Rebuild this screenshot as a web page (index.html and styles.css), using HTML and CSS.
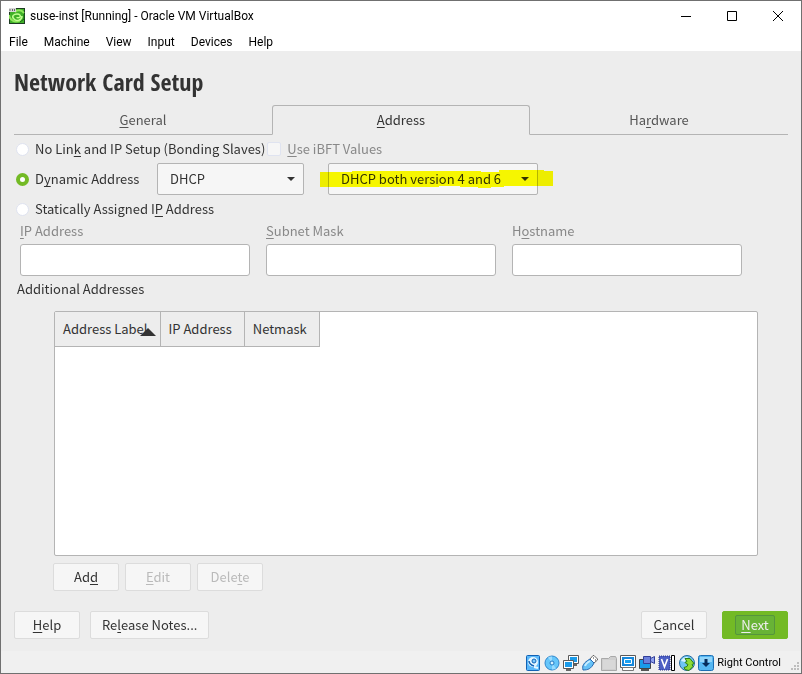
FILE: index.html
```html
<!DOCTYPE html>
<html lang="en">
<head>
<meta charset="utf-8">
<title>suse-inst [Running] - Oracle VM VirtualBox</title>
<link rel="stylesheet" href="styles.css">
</head>
<body>
<div class="window">
  <header class="titlebar">
    <svg width="16" height="16" viewBox="0 0 16 16" aria-hidden="true">
      <rect width="16" height="16" fill="#1d3b22"/>
      <rect x="1" y="1" width="14" height="14" fill="#3fb028"/>
      <path d="M0 7c1 6 6 8 12 5M15 5C12 1 8 2 6 4" fill="none" stroke="#8fe85c" stroke-width="2"/>
      <path d="M13 8c0 4-5 6-8 3S5 6 8 6s4 2 3 3-3 1-3 0" fill="none" stroke="#c2ff92" stroke-width="1.5"/>
      <path d="M15 6v5l-4 3" fill="none" stroke="#176b14"/>
      <rect width="7" height="4" fill="#d8d8d8"/>
      <path d="M0 2h2M3.500 1v2M5.500 1v2" stroke="#666" fill="none"/>
    </svg>
    <span class="window-title">suse-inst [Running] - Oracle VM VirtualBox</span>
    <div class="window-buttons">
      <button type="button" aria-label="Minimize"><svg width="10" height="10" viewBox="0 0 10 10"><path d="M0 5.5h10"/></svg></button>
      <button type="button" aria-label="Maximize"><svg width="10" height="10" viewBox="0 0 10 10"><path d="M.5 .5h9v9h-9z"/></svg></button>
      <button type="button" aria-label="Close"><svg width="10" height="10" viewBox="0 0 10 10"><path d="M0 0l10 10M10 0L0 10"/></svg></button>
    </div>
  </header>
  <nav class="menubar">
    <button type="button">File</button>
    <button type="button">Machine</button>
    <button type="button">View</button>
    <button type="button">Input</button>
    <button type="button">Devices</button>
    <button type="button">Help</button>
  </nav>

  <main class="guest">
    <h1>Network Card Setup</h1>
    <div class="tabs" role="tablist">
      <button type="button" role="tab" class="tab"><u>G</u>eneral</button>
      <button type="button" role="tab" class="tab active" aria-selected="true"><u>A</u>ddress</button>
      <button type="button" role="tab" class="tab">Ha<u>r</u>dware</button>
    </div>

    <div class="options">
      <div class="option-row">
        <label class="choice"><input type="radio" name="setup"><span>No Lin<u>k</u> and IP Setup (Bonding Slaves)</span></label>
        <label class="choice disabled"><input type="checkbox" disabled><span><u>U</u>se iBFT Values</span></label>
      </div>
      <div class="option-row">
        <label class="choice dynamic"><input type="radio" name="setup" checked><span>D<u>y</u>namic Address</span></label>
        <div class="combo">
          <select aria-label="Dynamic mode"><option>DHCP</option></select>
          <svg class="arrow" width="8" height="4" viewBox="0 0 8 4" aria-hidden="true"><path d="M0 0h8L4 4z"/></svg>
        </div>
        <div class="combo version">
          <select aria-label="DHCP version"><option>DHCP both version 4 and 6</option></select>
          <svg class="arrow" width="8" height="4" viewBox="0 0 8 4" aria-hidden="true"><path d="M0 0h8L4 4z"/></svg>
          <svg class="marker" width="233" height="18" viewBox="0 0 233 18" aria-hidden="true"><path d="M0 2h32v-1h129v1h18v-2h45v1h9v15h-49v1h-13v1h-13v-1h-18v-1h-21v1H0z"/></svg>
        </div>
      </div>
      <div class="option-row">
        <label class="choice"><input type="radio" name="setup"><span>Statically Assigned I<u>P</u> Address</span></label>
      </div>
    </div>

    <div class="fields">
      <div class="field"><label for="ip"><u>I</u>P Address</label><input id="ip" type="text" disabled></div>
      <div class="field"><label for="mask"><u>S</u>ubnet Mask</label><input id="mask" type="text" disabled></div>
      <div class="field"><label for="host">H<u>o</u>stname</label><input id="host" type="text" disabled></div>
    </div>

    <h2>Additional Addresses</h2>
    <div class="table-box">
      <table>
        <thead><tr>
          <th class="sorted">Address Label<svg width="16" height="8" viewBox="0 0 16 8" aria-hidden="true"><path d="M0 8h16L8 0z"/></svg></th>
          <th>IP Address</th>
          <th>Netmask</th>
        </tr></thead>
      </table>
    </div>
    <div class="table-actions">
      <button type="button" class="btn">Ad<u>d</u></button>
      <button type="button" class="btn" disabled><u>E</u>dit</button>
      <button type="button" class="btn" disabled>Dele<u>t</u>e</button>
    </div>
    <div class="wizard-actions">
      <button type="button" class="btn"><u>H</u>elp</button>
      <button type="button" class="btn">Re<u>l</u>ease Notes...</button>
      <button type="button" class="btn cancel"><u>C</u>ancel</button>
      <button type="button" class="btn primary"><span><u>N</u>ext</span></button>
    </div>
  </main>

  <footer class="statusbar">
    <svg width="16" height="16" viewBox="0 0 16 16" aria-label="Hard disk">
      <rect x="1.500" y=".5" width="13" height="15" rx="1" fill="#5ab8fa" stroke="#1262b5"/>
      <circle cx="8" cy="7" r="5" fill="#e6f6ff"/><circle cx="9" cy="6" r="2" fill="#7cc8fb" stroke="#1262b5"/>
      <path d="M4 6c0 3 2 4 5 5" fill="none" stroke="#1262b5" stroke-width="1.500"/><path d="M9 12l4 1" stroke="#e8f7ff" stroke-width="2"/>
    </svg>
    <svg width="16" height="16" viewBox="0 0 16 16" aria-label="Optical drive">
      <circle cx="8" cy="8" r="7" fill="#66c6fa" stroke="#2f86cc"/>
      <path d="M8 8L4 2.500a7 7 0 0 1 4-1zM8 8l4 5.500a7 7 0 0 1-4 1z" fill="#9adcff"/>
      <circle cx="8" cy="8" r="2" fill="#d8f2ff" stroke="#2378c2"/>
    </svg>
    <svg width="16" height="16" viewBox="0 0 16 16" aria-label="Network">
      <path d="M5.500 .5h10v8h-10z" fill="#fff" stroke="#5a5a5a"/><path d="M7 2h7v5H7z" fill="#1a9bea"/><path d="M11 9h3v2h-3z" fill="#666"/>
      <path d="M.5 5.500h10v8H.5z" fill="#fff" stroke="#5a5a5a"/><path d="M2 7h7v5H2z" fill="#1a9bea"/><path d="M3 14h5v2H3z" fill="#666"/>
    </svg>
    <svg width="16" height="16" viewBox="0 0 16 16" aria-label="USB">
      <path d="M8 4l3-3.500h1L15.500 4v1L12 8z" fill="#fff" stroke="#666"/><path d="M11 3h1M13 5h1" stroke="#333"/>
      <path d="M1 15c-1-4 0-7 7-11l4 4c-3 6-6 7-11 7z" fill="#65c1f6" stroke="#2869b0"/>
      <path d="M3 11c1-3 2-3 5-5" fill="none" stroke="#c8edff" stroke-width="2"/>
    </svg>
    <svg width="16" height="16" viewBox="0 0 16 16" aria-label="Shared folders">
      <path d="M.5 15.500v-12h7l2-2h5l1 2v12z" fill="#cfcfcf" stroke="#a9a9a9"/><path d="M2 5h12v9H2z" fill="#d8d8d8"/>
    </svg>
    <svg width="16" height="16" viewBox="0 0 16 16" aria-label="Display">
      <path d="M.5 .5h15v12h-15z" fill="#fff" stroke="#5a5a5a"/><path d="M2 2h12v9H2z" fill="#1688dc"/><path d="M4.500 4.500h7v4h-7z" fill="#1da1f0" stroke="#fff"/>
      <path d="M2.500 12.500h11v3h-11z" fill="#fff" stroke="#777"/>
    </svg>
    <svg width="16" height="16" viewBox="0 0 16 16" aria-label="Recording">
      <path d="M.5 4.500h11v9H.5z" fill="#1a9bea" stroke="#444"/><path d="M2 14h8v2H2z" fill="#555"/>
      <path d="M4.500 1.500h7v7h-7z" fill="#6b80dc" stroke="#323f99"/><path d="M11.500 3.500l4-2v7l-4-2z" fill="#8fa0ee" stroke="#323f99"/>
    </svg>
    <svg width="18" height="16" viewBox="0 0 18 16" aria-label="Virtualization">
      <rect x="1" y="1" width="11" height="14" fill="#4c5fc4" stroke="#26348c" stroke-dasharray="1 1"/>
      <path d="M3.500 4l3 8 3-8" fill="none" stroke="#fff" stroke-width="1.600"/>
      <path d="M13.500 .5h3v15h-3z" fill="#fff" stroke="#000"/>
    </svg>
    <svg width="16" height="16" viewBox="0 0 16 16" aria-label="Mouse integration">
      <circle cx="8" cy="8" r="7.500" fill="#6ec5f3" stroke="#276a9e"/><path d="M2 6c2-4 5-4 7-4L6 7z" fill="#d5f2ff"/>
      <path d="M6 3.500h5l4 5-2 1 1 2-4 4-4-1-1-2 3-1 1-2-2-1-1-1 2-1z" fill="#8edb35" stroke="#2c7d13"/>
    </svg>
    <svg width="16" height="16" viewBox="0 0 16 16" aria-label="Keyboard capture">
      <rect x=".5" y=".5" width="15" height="15" rx="2" fill="#55b7f2" stroke="#1d6fb4"/>
      <path d="M2 2h12v5H2z" fill="#91d5fb"/><path d="M6.500 4h3v4H12l-4 4-4-4h2.500z" fill="#062d5c"/>
    </svg>
    <span>Right Control</span>
    <svg class="grip" width="9" height="9" viewBox="0 0 9 9" aria-hidden="true"><path d="M7 0h2v2H7zM7 3h2v2H7zM7 6h2v2H7zM4 3h2v2H4zM4 6h2v2H4zM1 6h2v2H1z"/></svg>
  </footer>
</div>
</body>
</html>
```
FILE: styles.css
```css
* { box-sizing: border-box; }

body {
  margin: 0;
  color: #333;
  font: 13px/16px "Noto Sans CJK SC", sans-serif;
}

button, input, select { font: inherit; color: inherit; }
button { border: 0; padding: 0; background: none; white-space: nowrap; }

u {
  text-decoration-thickness: 1px;
  text-underline-offset: 2px;
  text-decoration-skip-ink: none;
}

.window {
  display: flex;
  flex-direction: column;
  min-height: 100vh;
  border: 1px solid #707070;
  background: #ededed;
}

/* Host window frame */
.titlebar, .menubar, .statusbar {
  display: flex;
  align-items: center;
  color: #000;
  font: 12px/16px Roboto, sans-serif;
}

.titlebar { height: 30px; padding-left: 8px; gap: 5px; background: #fff; }
.window-buttons { display: flex; margin-left: auto; }
.window-buttons button { display: grid; place-items: center; width: 46px; height: 30px; }
.window-buttons svg { fill: none; stroke: #000; }

.menubar { height: 20px; padding: 1px 0 0 8px; gap: 16px; background: #fff; }

.statusbar {
  height: 22px;
  gap: 3px;
  padding: 1px 2px 0 0;
  justify-content: flex-end;
  background: #f0f0f0;
  font-size: 11px;
}
.statusbar .grip { margin: 8px 0 0 6px; fill: #bdbdbd; }

/* Installer screen */
.guest { flex: 1; display: flex; flex-direction: column; padding: 17px 13px 12px; }

h1 { margin: 0 0 9px; font: bold 24px/28px "Open Sans Condensed", "Open Sans", sans-serif; }
h2 { margin: 5px 0 14px 3px; font: inherit; }

.tabs { display: grid; grid-template-columns: repeat(3, 1fr); }
.tab { height: 30px; border-bottom: 1px solid #b4b4b4; color: #555; }
.tab.active {
  border: 1px solid #b4b4b4;
  border-bottom-color: transparent;
  border-radius: 3px 3px 0 0;
  color: #333;
}

.option-row { display: flex; align-items: center; min-height: 28px; padding-left: 2px; }
.choice { display: flex; align-items: center; gap: 6px; }
.choice + .choice { margin-left: 2px; }
.choice.disabled { color: #888; }
.dynamic { flex: 0 0 141px; }

.choice input {
  appearance: none;
  width: 13px;
  height: 13px;
  margin: 0;
  border: 1px solid #dfe3f0;
  background: #fff;
}
.choice input[type="radio"] { border-radius: 50%; }
.choice input[type="radio"]:checked { border: 4px solid #73ba25; }
.choice input[type="checkbox"] { width: 14px; height: 14px; border-radius: 2px; background: #f6f6f6; }

.combo { position: relative; flex: 0 1 147px; }
.combo.version { flex-basis: 210px; margin-left: 24px; }
.combo select {
  appearance: none;
  display: block;
  width: 100%;
  height: 32px;
  padding: 0 24px 0 12px;
  border: 1px solid #b4b4b4;
  border-radius: 2px;
  background: #f6f6f6;
}
.arrow { position: absolute; right: 9px; top: 14px; fill: #333; }
.marker { position: absolute; left: -8px; top: 7px; fill: #ff0; mix-blend-mode: multiply; }

.fields { display: grid; grid-template-columns: repeat(3, 1fr); gap: 16px; padding: 0 46px 0 6px; }
.field { display: flex; flex-direction: column; gap: 5px; color: #888; }
.field input { width: 100%; height: 32px; border: 1px solid #b4b4b4; border-radius: 3px; background: #fff; }

.table-box {
  flex: 1;
  margin: 0 30px 0 40px;
  border: 1px solid #b4b4b4;
  border-radius: 2px;
  background: #fff;
}
table { border-collapse: separate; border-spacing: 0; }
th {
  position: relative;
  height: 35px;
  padding: 0 12px 0 8px;
  border: solid #b4b4b4;
  border-width: 0 1px 1px 0;
  background: #ededed;
  font-weight: inherit;
  white-space: nowrap;
}
.sorted svg { position: absolute; right: 4px; top: 16px; fill: #333; }

.table-actions { display: flex; gap: 6px; margin: 7px 39px 20px; }
.wizard-actions { display: flex; gap: 10px; }
.btn {
  min-width: 66px;
  height: 28px;
  padding: 0 11px;
  border: 1px solid #dcdcdc;
  border-radius: 2px;
  background: #f6f6f6;
}
.btn:disabled { color: #bababa; }
.cancel { margin-left: auto; }
.primary { margin-left: 5px; padding: 0; border-color: #73ba25; background: #73ba25; color: #eee; }
.primary span {
  display: inline-block;
  padding: 1px 5px;
  border: 1px solid #55953d;
  border-radius: 2px;
  background: #68b336;
}
```
